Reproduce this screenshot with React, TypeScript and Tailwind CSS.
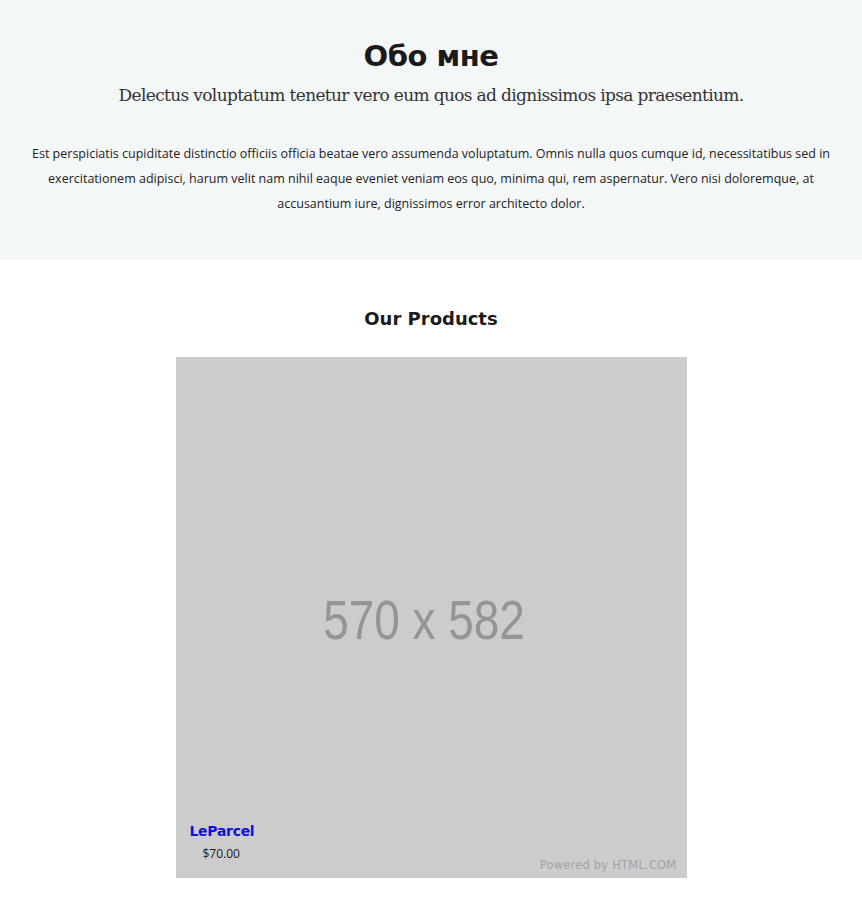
export default function App() {
  return (
    <div className="min-h-screen bg-white font-['Open_Sans',sans-serif] text-[#222]">
      {/* About */}
      <section className="bg-[#f4f7f8] h-[260px] pt-[36px] px-[30px] text-center">
        <h1 className="font-['DejaVu_Sans',sans-serif] font-bold text-[29px] leading-[40px] tracking-[-0.5px] text-[#1b1b1b]">
          Обо мне
        </h1>
        <p className="font-['DejaVu_Serif',serif] text-[17px] leading-[26px] mt-[6px] text-[#333] tracking-[-0.65px]">
          Delectus voluptatum tenetur vero eum quos ad dignissimos ipsa praesentium.
        </p>
        <p className="text-[12.5px] leading-[25px] mt-[33px] text-[#222]">
          Est perspiciatis cupiditate distinctio officiis officia beatae vero assumenda voluptatum. Omnis nulla quos cumque id, necessitatibus sed in exercitationem adipisci, harum velit nam nihil eaque eveniet veniam eos quo, minima qui, rem aspernatur. Vero nisi doloremque, at accusantium iure, dignissimos error architecto dolor.
        </p>
      </section>

      {/* Products */}
      <section className="pt-[46px] pb-[36px] flex flex-col items-center">
        <h2 className="font-['DejaVu_Sans',sans-serif] font-bold text-[18px] leading-[26px] text-[#1b1b1b]">
          Our Products
        </h2>
        <div className="relative mt-[25px] w-[511px] h-[521px] bg-[#cccccc]">
          <div className="absolute inset-0 flex items-center justify-center pt-[4px] pr-[15px]">
            <span className="font-['Liberation_Sans',sans-serif] text-[56px] text-[#959595] scale-x-[0.82] inline-block">
              570 x 582
            </span>
          </div>
          <div className="absolute left-[14px] top-[464px]">
            <div className="font-['DejaVu_Sans',sans-serif] font-bold text-[14px] leading-[20px] text-[#1010e0] tracking-[-0.3px]">
              LeParcel
            </div>
            <div className="text-[12px] leading-[20px] mt-[3px] ml-[13px] text-[#222]">$70.00</div>
          </div>
          <div className="absolute right-[10px] bottom-[5px] font-['DejaVu_Sans',sans-serif] text-[11.5px] leading-[16px] text-[#a3a3a3] tracking-[0.2px]">
            Powered by HTML.COM
          </div>
        </div>
      </section>
    </div>
  );
}
